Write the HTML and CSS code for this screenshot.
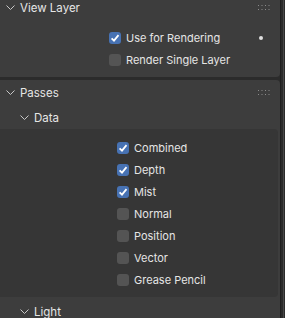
FILE: index.html
```html
<!DOCTYPE html>
<html lang="en">
<head>
    <meta charset="UTF-8">
    <title>View Layer Properties</title>
    <link rel="stylesheet" href="styles.css">
</head>
<body>
    <div class="editor">
        <div class="panels">
            <!-- View Layer panel -->
            <div class="panel view-layer">
                <div class="panel-header">
                    <svg class="chevron" width="9" height="6" viewBox="0 0 9 6"><polyline points="0.5,0.5 4.5,4.5 8.5,0.5"/></svg>
                    <span class="title">View Layer</span>
                    <svg class="grip" width="13" height="6" viewBox="0 0 13 6"><g><rect x="0" y="0" width="1" height="1"/><rect x="3.5" y="0" width="1" height="1"/><rect x="7" y="0" width="1" height="1"/><rect x="10.5" y="0" width="1" height="1"/><rect x="0" y="4" width="1" height="1"/><rect x="3.5" y="4" width="1" height="1"/><rect x="7" y="4" width="1" height="1"/><rect x="10.5" y="4" width="1" height="1"/></g></svg>
                </div>
                <div class="panel-body">
                    <label class="check-row">
                        <span class="box checked"><svg width="12" height="12" viewBox="0 0 12 12"><polyline points="2.6,6.3 5,8.6 9.5,3.2"/></svg></span>
                        <span class="label">Use for Rendering</span>
                        <span class="decorator"></span>
                    </label>
                    <label class="check-row">
                        <span class="box"></span>
                        <span class="label">Render Single Layer</span>
                    </label>
                </div>
            </div>

            <!-- Passes panel -->
            <div class="panel passes">
                <div class="panel-header">
                    <svg class="chevron" width="9" height="6" viewBox="0 0 9 6"><polyline points="0.5,0.5 4.5,4.5 8.5,0.5"/></svg>
                    <span class="title">Passes</span>
                    <svg class="grip" width="13" height="6" viewBox="0 0 13 6"><g><rect x="0" y="0" width="1" height="1"/><rect x="3.5" y="0" width="1" height="1"/><rect x="7" y="0" width="1" height="1"/><rect x="10.5" y="0" width="1" height="1"/><rect x="0" y="4" width="1" height="1"/><rect x="3.5" y="4" width="1" height="1"/><rect x="7" y="4" width="1" height="1"/><rect x="10.5" y="4" width="1" height="1"/></g></svg>
                </div>
                <div class="subpanel-header">
                    <svg class="chevron" width="9" height="6" viewBox="0 0 9 6"><polyline points="0.5,0.5 4.5,4.5 8.5,0.5"/></svg>
                    <span class="title">Data</span>
                </div>
                <div class="subpanel-body">
                    <label class="check-row">
                        <span class="box checked"><svg width="12" height="12" viewBox="0 0 12 12"><polyline points="2.6,6.3 5,8.6 9.5,3.2"/></svg></span>
                        <span class="label">Combined</span>
                    </label>
                    <label class="check-row">
                        <span class="box checked"><svg width="12" height="12" viewBox="0 0 12 12"><polyline points="2.6,6.3 5,8.6 9.5,3.2"/></svg></span>
                        <span class="label">Depth</span>
                    </label>
                    <label class="check-row">
                        <span class="box checked"><svg width="12" height="12" viewBox="0 0 12 12"><polyline points="2.6,6.3 5,8.6 9.5,3.2"/></svg></span>
                        <span class="label">Mist</span>
                    </label>
                    <label class="check-row">
                        <span class="box"></span>
                        <span class="label">Normal</span>
                    </label>
                    <label class="check-row">
                        <span class="box"></span>
                        <span class="label">Position</span>
                    </label>
                    <label class="check-row">
                        <span class="box"></span>
                        <span class="label">Vector</span>
                    </label>
                    <label class="check-row">
                        <span class="box"></span>
                        <span class="label">Grease Pencil</span>
                    </label>
                </div>
                <div class="subpanel-header">
                    <svg class="chevron" width="9" height="6" viewBox="0 0 9 6"><polyline points="0.5,0.5 4.5,4.5 8.5,0.5"/></svg>
                    <span class="title">Light</span>
                </div>
            </div>
        </div>
        <div class="scrollbar"></div>
    </div>
</body>
</html>
```

FILE: styles.css
```css
body {
    margin: 0;
    padding: 0;
    background-color: #2b2b2b;
    font-family: 'Inter', 'DejaVu Sans', sans-serif;
    font-size: 11px;
    color: #e5e5e5;
    overflow: hidden;
}

.editor {
    display: flex;
    width: 285px;
    height: 318px;
    overflow: hidden;
}

.panels {
    flex: 1;
    display: flex;
    flex-direction: column;
    gap: 3px;
    margin-left: -4px;
    margin-top: -5px;
}

.scrollbar {
    width: 5px;
    border-left: 1px solid #1f1f1f;
    box-sizing: border-box;
    background: linear-gradient(to right, #2b2b2b 0, #2b2b2b 2px, #484848 2px, #484848 3px, #2b2b2b 3px);
}

.panel {
    background-color: #3d3d3d;
    border-radius: 4px;
}

.panel-header {
    display: flex;
    align-items: center;
    height: 26px;
    padding-left: 10px;
    padding-right: 9px;
}

.subpanel-header {
    display: flex;
    align-items: center;
    height: 23px;
    padding-left: 24px;
}

.chevron {
    flex-shrink: 0;
    margin-right: 5px;
}

.chevron polyline {
    fill: none;
    stroke: #c8c8c8;
    stroke-width: 1;
}

.title {
    flex: 1;
    font-size: 11.5px;
    color: #e6e6e6;
}

.grip {
    fill: #8c8c8c;
}

.panel-body {
    padding: 6px 0 6px 0;
}

.subpanel-body {
    background-color: #363636;
    border-radius: 0 4px 4px 0;
    margin-right: 2px;
    padding: 8px 0 6px 0;
    margin-bottom: 3px;
}

.check-row {
    display: flex;
    align-items: center;
    height: 22px;
    padding-left: 113px;
}

.subpanel-body .check-row {
    padding-left: 121px;
}

.box {
    width: 12px;
    height: 12px;
    border-radius: 3px;
    background-color: #545454;
    margin-right: 5px;
    flex-shrink: 0;
}

.box.checked {
    background-color: #4772b3;
}

.box svg {
    display: block;
}

.box polyline {
    fill: none;
    stroke: #ffffff;
    stroke-width: 1.8;
}

.label {
    flex: 1;
}

.decorator {
    width: 4px;
    height: 4px;
    border-radius: 50%;
    background-color: #e0e0e0;
    margin-right: 17px;
}
```
